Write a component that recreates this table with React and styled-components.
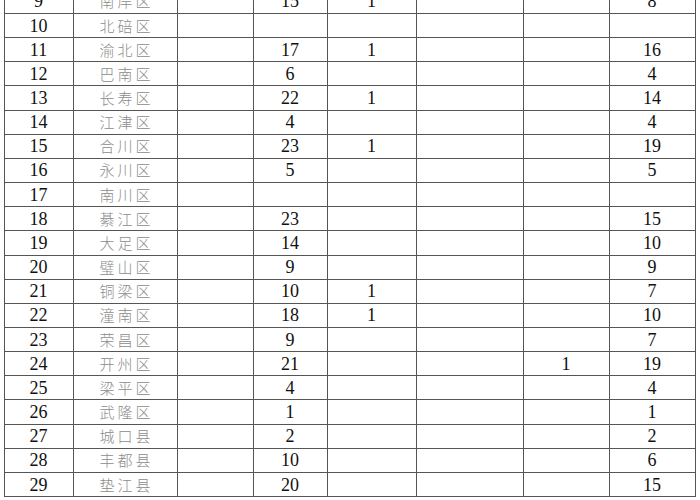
import React from "react";
import styled, { createGlobalStyle } from "styled-components";

const GlobalStyle = createGlobalStyle`
  html, body {
    margin: 0;
    padding: 0;
    background: #ffffff;
  }
  body {
    width: 700px;
    height: 500px;
    overflow: hidden;
    font-family: "Liberation Serif", "Noto Sans CJK SC", serif;
  }
`;

const widths = [69, 104, 76, 74, 89, 107, 86, 86];

const rows = [
  ["9", "南岸区", "", "15", "1", "", "", "8"],
  ["10", "北碚区", "", "", "", "", "", ""],
  ["11", "渝北区", "", "17", "1", "", "", "16"],
  ["12", "巴南区", "", "6", "", "", "", "4"],
  ["13", "长寿区", "", "22", "1", "", "", "14"],
  ["14", "江津区", "", "4", "", "", "", "4"],
  ["15", "合川区", "", "23", "1", "", "", "19"],
  ["16", "永川区", "", "5", "", "", "", "5"],
  ["17", "南川区", "", "", "", "", "", ""],
  ["18", "綦江区", "", "23", "", "", "", "15"],
  ["19", "大足区", "", "14", "", "", "", "10"],
  ["20", "璧山区", "", "9", "", "", "", "9"],
  ["21", "铜梁区", "", "10", "1", "", "", "7"],
  ["22", "潼南区", "", "18", "1", "", "", "10"],
  ["23", "荣昌区", "", "9", "", "", "", "7"],
  ["24", "开州区", "", "21", "", "", "1", "19"],
  ["25", "梁平区", "", "4", "", "", "", "4"],
  ["26", "武隆区", "", "1", "", "", "", "1"],
  ["27", "城口县", "", "2", "", "", "", "2"],
  ["28", "丰都县", "", "10", "", "", "", "6"],
  ["29", "垫江县", "", "20", "", "", "", "15"],
];

// the first row is cut off by the top edge of the scan
const Page = styled.div`
  padding-left: 3.5px;
  margin-top: -11.2px;
`;

const Table = styled.table`
  border-collapse: collapse;
  table-layout: fixed;
  width: 691px;
`;

const Row = styled.tr`
  height: 24.17px;
`;

const Cell = styled.td`
  border: 1px solid #555555;
  padding: 0;
  text-align: center;
  vertical-align: middle;
  line-height: 20px;
  white-space: nowrap;
  overflow: hidden;
  font-family: ${(p) =>
    p.$cjk
      ? '"Noto Sans CJK SC", sans-serif'
      : '"Liberation Serif", "Times New Roman", serif'};
  font-size: ${(p) => (p.$cjk ? "15px" : "18px")};
  font-weight: ${(p) => (p.$cjk ? 300 : 400)};
  letter-spacing: ${(p) => (p.$cjk ? "3px" : "0")};
  padding-left: ${(p) => (p.$cjk ? "3px" : "0")};
  color: ${(p) => (p.$cjk ? "#8c8c8c" : "#111111")};
`;

export default function App() {
  return (
    <>
      <GlobalStyle />
      <Page>
        <Table>
          <colgroup>
            {widths.map((w, i) => (
              <col key={i} style={{ width: w }} />
            ))}
          </colgroup>
          <tbody>
            {rows.map((r) => (
              <Row key={r[0]}>
                {r.map((v, i) => (
                  <Cell key={i} $cjk={i === 1}>
                    {v}
                  </Cell>
                ))}
              </Row>
            ))}
          </tbody>
        </Table>
      </Page>
    </>
  );
}
